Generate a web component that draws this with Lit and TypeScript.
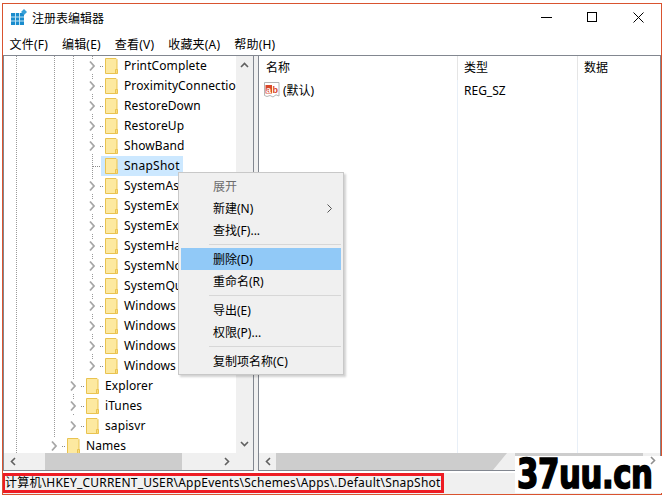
import { LitElement, html, css, svg } from "lit";
import { customElement } from "lit/decorators.js";

interface Row { name: string; level: number; }
const rows: Row[] = [
  ...["PrintComplete","ProximityConnectio","RestoreDown","RestoreUp","ShowBand","SnapShot","SystemAs","SystemEx","SystemEx","SystemHa","SystemNo","SystemQu","Windows","Windows","Windows","Windows"].map(name => ({ name, level: 3 })),
  ...["Explorer","iTunes","sapisvr"].map(name => ({ name, level: 2 })),
  { name: "Names", level: 1 },
];

const folder = svg`<svg class="folder" width="13" height="16" viewBox="0 0 13 16"><path d="M.5.5h10.500l1 1v14h-11.500z" fill="#fde9a0" stroke="#e9c350"/><path d="M10.500 11.500h2v4h-2z" fill="#fbdc7c" stroke="#e9c350"/></svg>`;
const chevron = svg`<svg class="chev" width="7" height="14" viewBox="0 0 7 14"><path d="M1 2.500l4 4.500-4 4.500" fill="none" stroke="#a6a6a6" stroke-width="1.800"/></svg>`;

@customElement("app-root")
export class AppRoot extends LitElement {
  static styles = css`
    :host { display: block; width: 665px; height: 498px; background: #fff; font: 12px "Noto Sans", "Noto Sans CJK SC", sans-serif; color: #000; }
    .page { padding: 3px 3px 3px 2px; height: 100%; box-sizing: border-box; }
    .win { position: relative; height: 100%; box-sizing: border-box; border: 1px solid #d9532f; display: flex; flex-direction: column; background: #fff; }
    .title { height: 29px; box-sizing: border-box; padding: 0 0 2px 8px; display: flex; align-items: center; flex: none; }
    .title .t { flex: 1; margin-left: 4px; }
    .ctl { width: 46px; height: 27px; display: flex; align-items: center; justify-content: center; }
    .menu { height: 21px; display: flex; align-items: center; gap: 14px; padding-left: 6.5px; flex: none; letter-spacing: .2px; }
    .main { flex: 1; display: flex; min-height: 0; border-top: 1px solid #828790; gap: 4px; margin-top: 1px; background: #f0f0f0; }
    .pane { border: 1px solid #828790; border-top: none; background: #fff; display: flex; flex-direction: column; min-height: 0; }
    .left { width: 249px; flex: none; }
    .right { flex: 1; min-width: 0; }
    .tbody { flex: 1; display: flex; min-height: 0; }
    .tree { flex: 1; overflow: hidden; min-width: 0;
      background-image: repeating-linear-gradient(#9a9a9a 0 1px, transparent 1px 2px), repeating-linear-gradient(#9a9a9a 0 1px, transparent 1px 2px), repeating-linear-gradient(#9a9a9a 0 1px, transparent 1px 2px), repeating-linear-gradient(#9a9a9a 0 1px, transparent 1px 2px);
      background-size: 1px 100%, 1px 381px, 1px 360px, 1px 310px;
      background-position: 12px 0, 50px 0, 69px 0, 88px 0;
      background-repeat: no-repeat; }
    .row { height: 20px; display: flex; align-items: center; white-space: nowrap; }
    .chev { flex: none; background: #fff; }
    .dots { width: 3px; flex: none; margin: 0 2px 0 4px; border-top: 1px dotted #8a8a8a; }
    .dots.long { width: 8px; margin: 0 1px 0 0; }
    .gap { width: 3px; flex: none; }
    .folder { flex: none; }
    .lbox { display: flex; align-items: center; height: 20px; }
    .label { padding: 0 2px 0 6px; line-height: 18px; letter-spacing: .1px; }
    .sel .lbox { background: #cce8ff; padding-left: 4px; }
    .sel .label { padding-right: 3px; letter-spacing: .25px; }
    .vbar { width: 17px; flex: none; background: #f0f0f0; display: flex; flex-direction: column; justify-content: space-between; align-items: center; padding: 6px 0; box-sizing: border-box; }
    .hbar { height: 17px; flex: none; background: #f0f0f0; display: flex; align-items: center; justify-content: space-between; padding: 0 23px 0 6px; position: relative; }
    .thumb { position: absolute; background: #cdcdcd; height: 17px; top: 0; }
    .thumb.a { left: 41px; width: 137px; }
    .thumb.b { left: 17px; right: 17px; }
    .rbody { flex: 1; display: grid; grid-template-columns: 199px 120px 1fr; grid-template-rows: 24px 1fr; min-height: 0; }
    .head { padding: 2px 0 0 6px; border-right: 1px solid #e5e5e5; }
    .head.first { padding-left: 7px; }
    .head.last, .cell.last { border-right: none; }
    .cell { padding: 1px 0 0 6px; display: flex; align-items: flex-start; border-right: 1px solid #e8eff7; box-sizing: border-box; line-height: 20px; }
    .cell.first { padding-left: 5px; gap: 3px; }
    .cell svg { flex: none; margin-top: 1px; }
    .status { height: 21px; flex: none; margin-top: 2px; background: #f0f0f0; display: flex; align-items: flex-start; }
    .path { border: solid #ed1c24; border-width: 3px 3px 3px 2px; line-height: 14px; letter-spacing: .21px; white-space: nowrap; }
    .ctx { position: absolute; left: 175px; top: 168px; width: 166px; background: #f0f0f0; border: 1px solid #c8c8c8; box-shadow: 2px 2px 2px rgba(0,0,0,.18); padding: 2px; box-sizing: border-box; }
    .mi { height: 22px; display: flex; align-items: center; justify-content: space-between; padding: 0 9px 0 32px; }
    .mi.dis { color: #6d6d6d; }
    .mi.on { background: #91c9f7; }
    .sep { height: 1px; background: #d7d7d7; margin: 3px 0 3px 28px; }
    .mark { position: absolute; left: 512px; top: 452px; width: 147px; height: 37px; background: #fff; white-space: nowrap; }
    .mark .fade { position: absolute; left: -22px; top: -3px; width: 22px; height: 17px; background: #f0f0f0; clip-path: polygon(14px 0, 100% 0, 100% 100%, 0 100%); }
    .mark .txt { position: absolute; left: 2px; top: 0; font: bold 40px/36px "DejaVu Sans Condensed", "DejaVu Sans", sans-serif; color: #000; transform-origin: 0 0; transform: scaleX(.855); -webkit-text-stroke: 1.500px #000; letter-spacing: -.5px; }
    .mark svg { position: absolute; left: 135px; top: 0; }
  `;

  render() {
    return html`<div class="page"><div class="win">
      <div class="title">
        <svg width="17" height="17" viewBox="0 0 17 17" style="flex:none">
          <rect x="0" y="4" width="13" height="12" fill="#1a8ccd"/>
          <path d="M0 8h13M0 12h13M4.500 4v12M8.500 4v12" stroke="#bfe3f5" stroke-width="1"/>
          <path d="M13 0l3 3-3 3-3-3z" fill="#37a0d8"/>
        </svg>
        <span class="t">注册表编辑器</span>
        <div class="ctl"><svg width="11" height="11" viewBox="0 0 11 11"><path d="M0 5.500h11" stroke="#000"/></svg></div>
        <div class="ctl"><svg width="11" height="11" viewBox="0 0 11 11"><rect x=".5" y=".5" width="9" height="9" fill="none" stroke="#000"/></svg></div>
        <div class="ctl"><svg width="11" height="11" viewBox="0 0 11 11"><path d="M.5.500l10 10M10.500.500l-10 10" stroke="#000" fill="none"/></svg></div>
      </div>
      <div class="menu"><span>文件(F)</span><span>编辑(E)</span><span>查看(V)</span><span>收藏夹(A)</span><span>帮助(H)</span></div>
      <div class="main">
        <div class="pane left">
          <div class="tbody">
            <div class="tree">
              ${rows.map(r => html`<div class="row ${r.name === "SnapShot" ? "sel" : ""}" style="padding-left:${r.level * 19 + 28}px">
                ${r.name === "SnapShot"
                  ? html`<span class="gap"></span><span class="dots long"></span>`
                  : html`${chevron}<span class="dots"></span>`}
                <span class="lbox">${folder}<span class="label">${r.name}</span></span>
              </div>`)}
            </div>
            <div class="vbar">
              <svg width="9" height="6" viewBox="0 0 9 6"><path d="M1 5l3.500-3.500L8 5" fill="none" stroke="#606060" stroke-width="1.600"/></svg>
              <svg width="9" height="6" viewBox="0 0 9 6"><path d="M1 1l3.500 3.500L8 1" fill="none" stroke="#606060" stroke-width="1.600"/></svg>
            </div>
          </div>
          <div class="hbar"><div class="thumb a"></div>
            <svg width="6" height="9" viewBox="0 0 6 9"><path d="M5 1L1.500 4.500 5 8" fill="none" stroke="#606060" stroke-width="1.600"/></svg>
            <svg width="6" height="9" viewBox="0 0 6 9"><path d="M1 1l3.500 3.500L1 8" fill="none" stroke="#606060" stroke-width="1.600"/></svg>
          </div>
        </div>
        <div class="pane right">
          <div class="rbody">
            <div class="head first">名称</div><div class="head">类型</div><div class="head last">数据</div>
            <div class="cell first">
              <svg width="16" height="16" viewBox="0 0 16 16"><path d="M.5.500h14.500v13.500l-3-1.200-3 2.200-3-1.500-3 1-2.500-1z" fill="#fff" stroke="#b5b5b5"/><rect x="1.500" y="3" width="6.500" height="8.500" fill="#d9492a"/><text x="2" y="10.500" font-size="9" font-weight="700" fill="#fff" font-family="Liberation Sans">a</text><text x="8.500" y="10.500" font-size="9" font-weight="700" fill="#d9492a" font-family="Liberation Sans">b</text></svg>
              <span>(默认)</span>
            </div>
            <div class="cell">REG_SZ</div>
            <div class="cell last"></div>
          </div>
          <div class="hbar"><div class="thumb b"></div>
            <svg width="6" height="9" viewBox="0 0 6 9"><path d="M5 1L1.500 4.500 5 8" fill="none" stroke="#606060" stroke-width="1.600"/></svg>
          </div>
        </div>
      </div>
      <div class="status"><span class="path">计算机\\HKEY_CURRENT_USER\\AppEvents\\Schemes\\Apps\\.Default\\SnapShot</span></div>
      <div class="ctx">
        <div class="mi dis">展开</div>
        <div class="mi">新建(N)<svg width="5" height="9" viewBox="0 0 5 9"><path d="M.5.500l4 4-4 4" fill="none" stroke="#555"/></svg></div>
        <div class="mi">查找(F)...</div>
        <div class="sep"></div>
        <div class="mi on">删除(D)</div>
        <div class="mi">重命名(R)</div>
        <div class="sep"></div>
        <div class="mi">导出(E)</div>
        <div class="mi">权限(P)...</div>
        <div class="sep"></div>
        <div class="mi">复制项名称(C)</div>
      </div>
      <div class="mark"><div class="fade"></div><span class="txt">37uu.cn</span><svg width="6" height="9" viewBox="0 0 6 9"><path d="M1 1l3.500 3.500L1 8" fill="none" stroke="#909090" stroke-width="1.600"/></svg></div>
    </div></div>`;
  }
}
